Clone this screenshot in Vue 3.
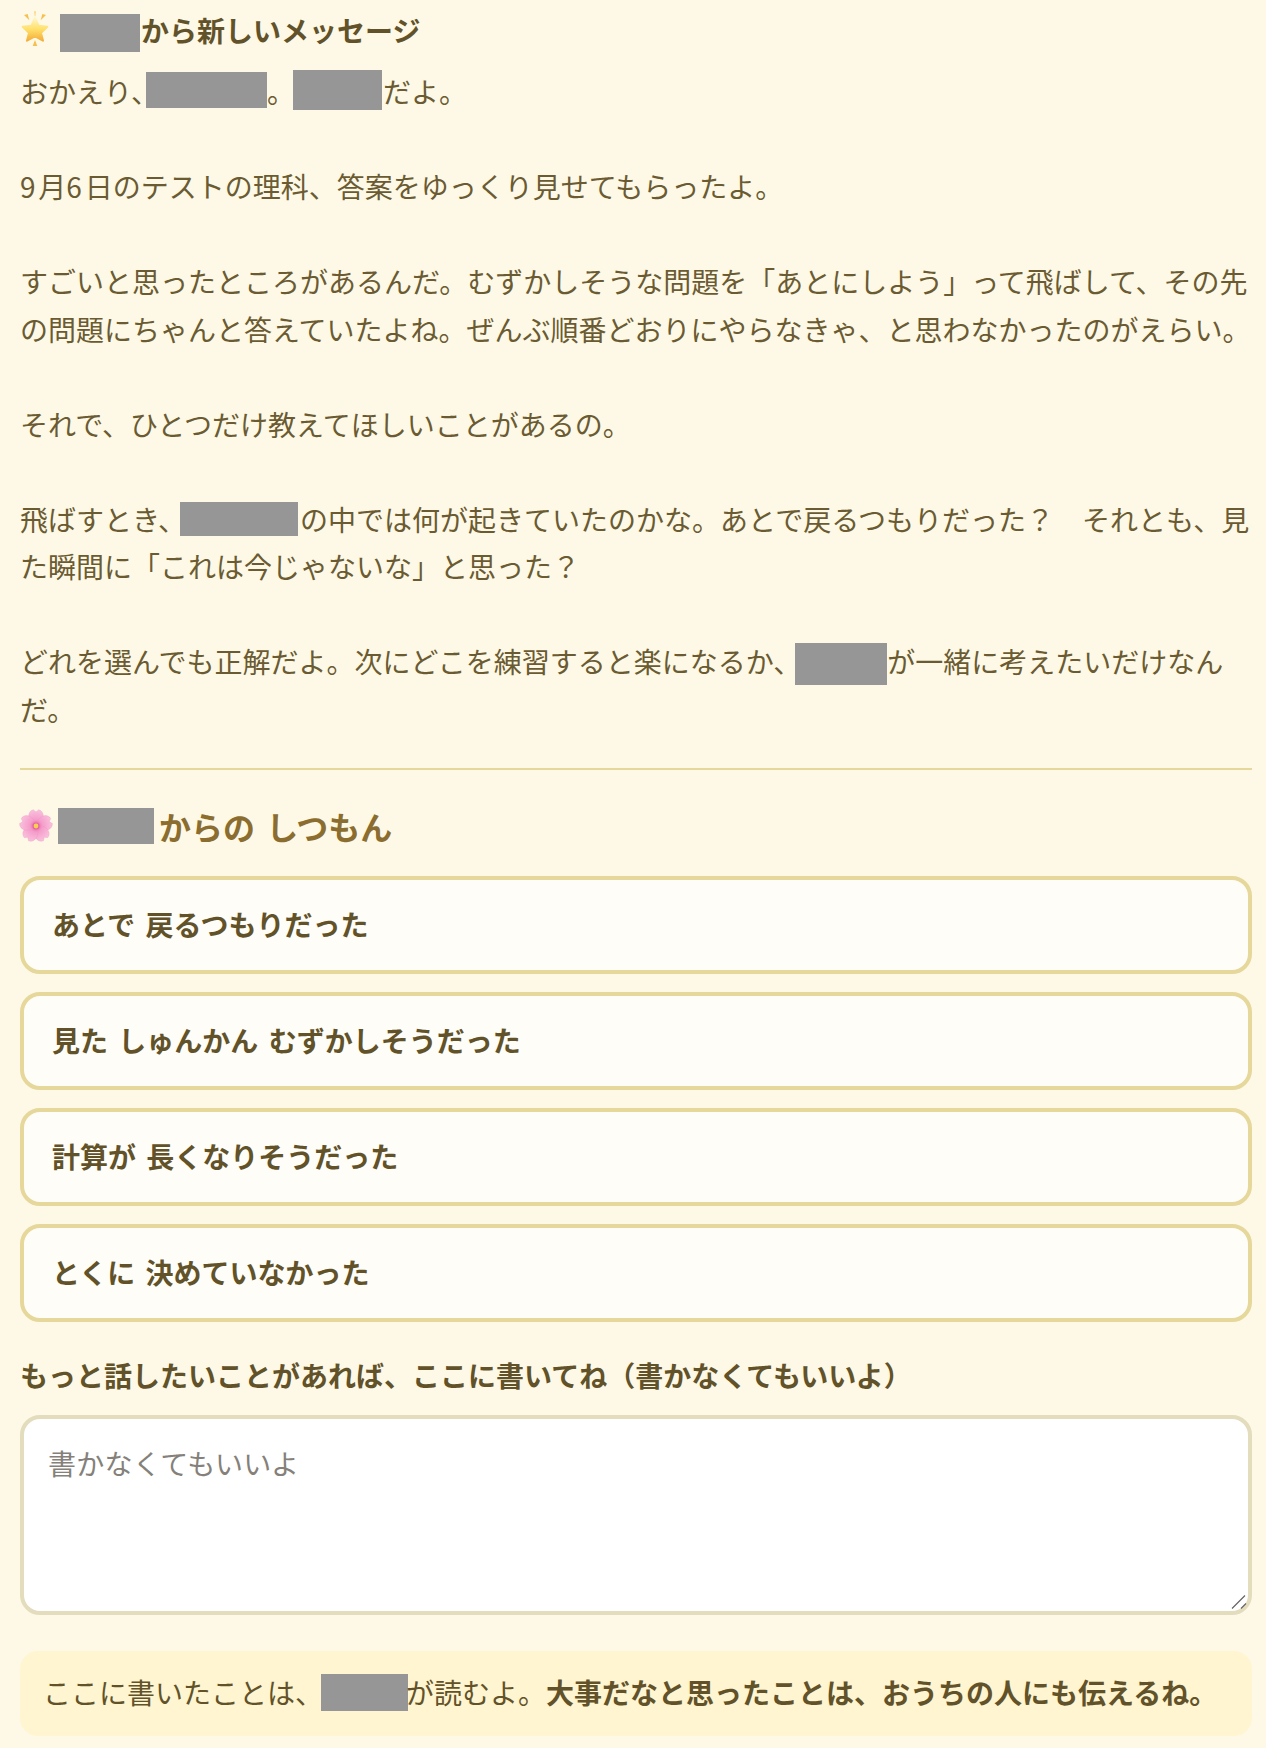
<script setup>
const choices = [
  'あとで 戻るつもりだった',
  '見た しゅんかん むずかしそうだった',
  '計算が 長くなりそうだった',
  'とくに 決めていなかった'
]
const petals = [0, 72, 144, 216, 288]
</script>

<template>
  <div class="page">
    <h1 class="head">
      <svg class="star" viewBox="0 0 120 120" aria-hidden="true">
        <defs>
          <linearGradient id="starFill" x1="0" y1="0" x2="0" y2="1">
            <stop offset="0" stop-color="#fff6c4" />
            <stop offset="0.5" stop-color="#ffe06a" />
            <stop offset="1" stop-color="#f4ae3a" />
          </linearGradient>
        </defs>
        <path d="M60 24 L71 47 L97 50 L78 68 L84 92 L60 79 L36 92 L42 68 L23 50 L49 47 Z" fill="url(#starFill)" stroke="url(#starFill)" stroke-width="6" stroke-linejoin="round" />
        <path d="M27 15 L38 12 L43 31 Z M93 15 L82 12 L77 31 Z M60 90 L67 108 L53 108 Z" fill="#f6c04e" />
        <path d="M57 4 H63 L61 19 H59 Z" fill="#fbd97a" />
      </svg>
      <span class="mask m-head"></span>から新しいメッセージ
    </h1>
    <div class="body">
      <p>おかえり、<span class="mask m-name"></span>。<span class="mask m-self"></span>だよ。</p>
      <p><span class="num">9</span>月<span class="num">6</span>日のテストの理科、答案をゆっくり見せてもらったよ。</p>
      <p>すごいと思ったところがあるんだ。むずかしそうな問題を「あとにしよう」って飛ばして、その先の問題にちゃんと答えていたよね。ぜんぶ順番どおりにやらなきゃ、と思わなかったのがえらい。</p>
      <p>それで、ひとつだけ教えてほしいことがあるの。</p>
      <p>飛ばすとき、<span class="mask m-inner"></span>の中では何が起きていたのかな。あとで戻るつもりだった？　それとも、見た瞬間に「これは今じゃないな」と思った？</p>
      <p>どれを選んでも正解だよ。次にどこを練習すると楽になるか、<span class="mask m-with"></span>が一緒に考えたいだけなんだ。</p>
    </div>
    <hr class="rule" />
    <h2 class="title">
      <svg class="flower" viewBox="0 0 100 100" aria-hidden="true">
        <defs>
          <radialGradient id="petalFill" gradientUnits="userSpaceOnUse" cx="50" cy="50" r="50">
            <stop offset="0.12" stop-color="#e86aa8" />
            <stop offset="0.36" stop-color="#f59cca" />
            <stop offset="1" stop-color="#fac4df" />
          </radialGradient>
        </defs>
        <path
          v-for="a in petals"
          :key="a"
          d="M50 50 C24 38 22 8 42 2 L50 9 L58 2 C78 8 76 38 50 50 Z"
          fill="url(#petalFill)"
          stroke="#ec93c4"
          stroke-width="1"
          :transform="`rotate(${a} 50 50)`"
        />
        <circle cx="50" cy="50" r="10.5" fill="#de5a92" opacity="0.55" />
        <circle cx="50" cy="50" r="7" fill="#f9cf52" />
      </svg>
      <span class="mask m-title"></span>からの しつもん
    </h2>
    <div class="choices">
      <button v-for="c in choices" :key="c" class="choice" type="button">{{ c }}</button>
    </div>
    <label class="label" for="free">もっと話したいことがあれば、ここに書いてね（書かなくてもいいよ）</label>
    <div class="free-wrap">
      <textarea id="free" class="free" placeholder="書かなくてもいいよ"></textarea>
      <svg class="grip" viewBox="0 0 16 16" aria-hidden="true">
        <path d="M14 1.5 L1 14.5 M15 9.5 L10 14.5" stroke="#666" stroke-width="1.2" fill="none" />
      </svg>
    </div>
    <p class="note">ここに書いたことは、<span class="mask m-note"></span>が読むよ。<strong>大事だなと思ったことは、おうちの人にも伝えるね。</strong></p>
  </div>
</template>

<style>
html, body { margin: 0; background: #fef9e7; }
</style>

<style scoped>
.page {
  box-sizing: border-box;
  width: 1266px;
  height: 1748px;
  padding: 8px 14px 0 20px;
  background: #fef9e7;
  color: #6b5b32;
  font-family: "Noto Sans CJK JP", "Noto Sans", sans-serif;
  overflow: hidden;
}
.mask {
  display: inline-block;
  background: #969696;
  vertical-align: middle;
}
.num { letter-spacing: 2.8px; }
.head {
  display: flex;
  align-items: center;
  height: 44px;
  margin: 0;
  font-size: 28px;
  font-weight: 700;
  line-height: 44px;
  color: #625229;
}
.star { width: 40px; height: 40px; margin: 0 5px 0 -5px; }
.m-head { width: 80px; height: 38px; margin: 6px 1px 0 0; }
.body {
  margin-top: 16px;
  font-size: 28px;
  line-height: 47.5px;
}
.body p { margin: 0 0 47.5px; }
.body p:last-child { margin-bottom: 0; }
.m-name { width: 121px; height: 36px; margin: -15px 0 -5px -13px; }
.m-self { width: 89px; height: 40px; margin: -15px 1px -5px -2px; }
.m-inner { width: 118px; height: 34px; margin: -14px 2px -6px -6px; }
.m-with { width: 92px; height: 42px; margin: -11px 0 -9px -6px; }
.rule {
  height: 2px;
  margin: 35px 0 0;
  border: 0;
  background: #e6d79b;
}
.title {
  display: flex;
  align-items: center;
  height: 44px;
  margin: 34px 0 0;
  font-size: 32px;
  font-weight: 700;
  line-height: 44px;
  word-spacing: 4px;
  color: #8a6d2f;
}
.flower { width: 34px; height: 34px; margin: 0 5px 0 -1px; }
.m-title { width: 96px; height: 36px; margin-right: 5px; }
.choices {
  display: flex;
  flex-direction: column;
  gap: 18px;
  margin-top: 28px;
}
.choice {
  box-sizing: border-box;
  height: 98px;
  padding: 0 28px 2px;
  border: 4px solid #e6d79b;
  border-radius: 20px;
  background: #fffdf7;
  color: #625229;
  font: 700 28px/1.5 "Noto Sans CJK JP", "Noto Sans", sans-serif;
  word-spacing: 4px;
  text-align: left;
}
.label {
  display: block;
  margin-top: 31px;
  font-size: 28px;
  font-weight: 700;
  line-height: 44px;
  color: #625229;
}
.free-wrap {
  position: relative;
  margin-top: 18px;
}
.free {
  display: block;
  box-sizing: border-box;
  width: 100%;
  height: 200px;
  padding: 23px 24px;
  border: 4px solid #e3dcbd;
  border-radius: 20px;
  background: #fff;
  color: #5d4e29;
  font: 400 28px/1.5 "Noto Sans CJK JP", "Noto Sans", sans-serif;
  letter-spacing: 0.3px;
  outline: none;
  resize: none;
}
.free::placeholder { color: #85817a; opacity: 1; }
.grip {
  position: absolute;
  right: 5px;
  bottom: 5px;
  width: 16px;
  height: 16px;
  pointer-events: none;
}
.note {
  box-sizing: border-box;
  height: 85px;
  margin: 36px 0 0;
  padding: 0 23px 2px;
  border-radius: 18px;
  background: #fff5d1;
  color: #625229;
  font-size: 28px;
  line-height: 83px;
}
.note strong { font-weight: 700; }
.m-note { width: 87px; height: 37px; margin: -14px -2px -6px -2px; }
</style>
